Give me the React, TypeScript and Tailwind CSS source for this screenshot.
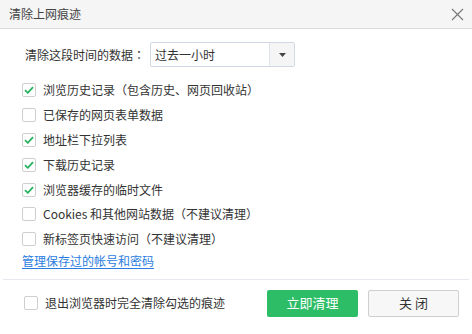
import React from "react";

function Box({ checked }: { checked: boolean }) {
  return (
    <span className="flex h-[14px] w-[14px] shrink-0 items-center justify-center rounded-[2px] border border-[#cfcfcf] bg-white">
      {checked && (
        <svg width="10" height="8" viewBox="0 0 10 8">
          <path d="M1 4.2 L3.8 6.8 L9 1.2" fill="none" stroke="#27b35f" strokeWidth="1.8" />
        </svg>
      )}
    </span>
  );
}

const items: [string, boolean][] = [
  ["浏览历史记录（包含历史、网页回收站）", true],
  ["已保存的网页表单数据", false],
  ["地址栏下拉列表", true],
  ["下载历史记录", true],
  ["浏览器缓存的临时文件", true],
  ["Cookies 和其他网站数据（不建议清理）", false],
  ["新标签页快速访问（不建议清理）", false],
];

export default function App() {
  return (
    <div className="flex h-[334px] w-[472px] flex-col bg-white font-['Noto_Sans_CJK_SC','Noto_Sans',sans-serif] text-[12px] text-[#333]">
      <div className="flex h-[29px] shrink-0 items-center justify-between border-b border-[#dcdcdc] bg-[#f5f5f5] pl-[9px] pr-[8px]">
        <span className="text-[12px] text-[#444]">清除上网痕迹</span>
        <svg width="13" height="13" viewBox="0 0 13 13">
          <path d="M1 1 L12 12 M12 1 L1 12" stroke="#777" strokeWidth="1.1" />
        </svg>
      </div>
      <div className="flex flex-col pl-[22px]">
        <div className="mt-[13px] flex h-[25px] items-center">
          <span className="ml-[3px] w-[125px]">
            清除这段时间的数据<span className="font-['Noto_Sans_CJK_TC',sans-serif]">：</span>
          </span>
          <div className="flex h-[25px] w-[145px] items-stretch rounded-[2px] border border-[#cfd8e3] bg-white">
            <span className="flex flex-1 items-center pl-[4px] text-[12px] text-[#333]">过去一小时</span>
            <span className="flex w-[25px] items-center justify-center border-l border-[#dde3ea] bg-[#f5f5f5]">
              <svg width="7" height="4" viewBox="0 0 7 4">
                <path d="M0 0 L7 0 L3.5 4 Z" fill="#444" />
              </svg>
            </span>
          </div>
        </div>
        <div className="mt-[11px] flex flex-col">
          {items.map(([t, c]) => (
            <div key={t} className="flex h-[24.8px] items-center gap-[7px]">
              <Box checked={c} />
              <span>{t}</span>
            </div>
          ))}
        </div>
        <div className="flex h-[18px] items-center">
          <span className="text-[#2a7de0] underline underline-offset-2">管理保存过的帐号和密码</span>
        </div>
      </div>
      <div className="mx-[3px] mt-[9px] border-t border-[#e6e8f0]" />
      <div className="flex flex-1 items-start pt-[10px]">
        <div className="ml-[24px] flex h-[27px] items-center gap-[7px]">
          <Box checked={false} />
          <span>退出浏览器时完全清除勾选的痕迹</span>
        </div>
        <div className="ml-auto mr-[13px] flex gap-[10px]">
          <button className="flex h-[27px] w-[91px] items-center justify-center rounded-[2px] bg-[#2dbd67] text-[13px] text-white">
            立即清理
          </button>
          <button className="flex h-[27px] w-[91px] items-center justify-center rounded-[2px] border border-[#cfcfcf] bg-[#f7f7f7] text-[13px] text-[#333]">
            关 闭
          </button>
        </div>
      </div>
    </div>
  );
}
